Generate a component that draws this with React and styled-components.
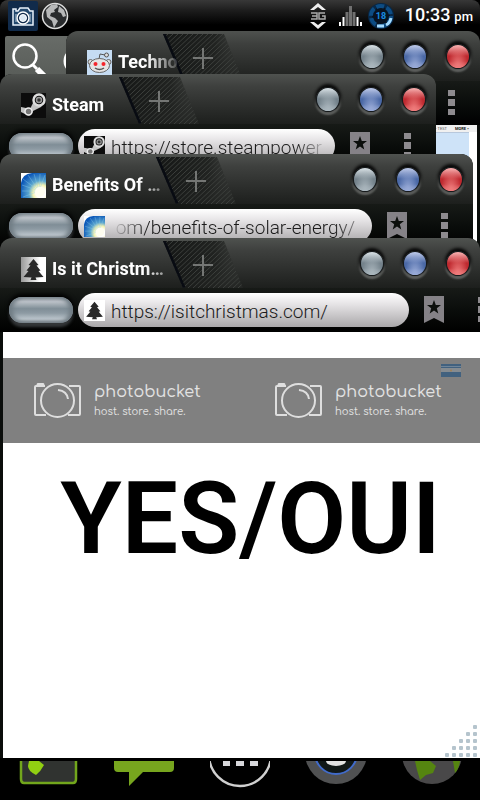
import React from "react";
import styled, { createGlobalStyle, css } from "styled-components";

const Global = createGlobalStyle`
  * { box-sizing: border-box; }
  html, body { margin: 0; background: #000; }
  body { font-family: Roboto, "Liberation Sans", sans-serif; }
  button { border: 0; padding: 0; background: none; font: inherit; color: inherit; cursor: pointer; }
`;

const Screen = styled.div`
  position: relative;
  min-height: 100vh;
  display: flex;
  flex-direction: column;
  overflow: hidden;
  background: #000;
`;

const StatusBar = styled.header`
  height: 31px;
  display: flex;
  align-items: center;
  padding: 1px 7px 0 8px;
  border-radius: 8px 8px 0 0;
  background: linear-gradient(#383838, #1c1c1c 35%, #000 80%);
  color: #fff;
`;
const StatusGroup = styled.div`
  display: flex;
  align-items: center;
  gap: ${(p) => p.$gap}px;
`;
const Spacer = styled.div`flex: 1;`;
const Clock = styled.time`
  margin-left: 9px;
  font-size: 18px;
  line-height: 32px;
  font-weight: 500;
  white-space: nowrap;
  small { font-size: 13px; margin-left: 4px; }
`;

const Home = styled.main`
  flex: 1;
  display: flex;
  flex-direction: column;
  justify-content: space-between;
`;
const SearchWidget = styled.button`
  align-self: flex-start;
  display: block;
  margin: 5px 0 0 5px;
  width: 100px;
  height: 50px;
  text-align: left;
  border-radius: 2px;
  background: linear-gradient(#686c68, #555955);
  svg { display: block; }
`;
const Dock = styled.nav`
  height: 39px;
  display: flex;
  justify-content: space-between;
  padding: 0 18px;
`;
const DockItem = styled.button`
  width: 60px;
  height: 39px;
  svg { display: block; }
`;

/* Floating browser windows */
const Frame = styled.section`
  position: absolute;
  left: ${(p) => p.$left}px;
  right: ${(p) => p.$right}px;
  top: ${(p) => p.$top}px;
  ${(p) => (p.$bottom ? css`bottom: ${p.$bottom}px;` : css`height: ${p.$height}px;`)}
  display: flex;
  flex-direction: column;
  overflow: hidden;
  border-radius: 12px 12px 0 0;
  background: #0a0d0b;
`;
const TitleBar = styled.div`
  flex: none;
  height: 50px;
  display: flex;
  align-items: flex-start;
  padding: 0 10px 0 21px;
  background: linear-gradient(#4f524f 0, #3e403e 25%, #2a2c2a 70%, #1d1f1d 100%);
`;
const Tab = styled.button`
  flex: 1;
  min-width: 0;
  height: 26px;
  margin-top: 18px;
  display: flex;
  align-items: center;
  gap: 6px;
  z-index: 1;
  color: #fff;
  svg { flex: none; }
`;
const TabTitle = styled.span`
  flex: 1;
  text-align: left;
  white-space: nowrap;
  font-size: 18px;
  line-height: 28px;
  font-weight: 700;
  mask-image: linear-gradient(90deg, #000 calc(100% - 32px), transparent calc(100% + 6px));
`;
const NewTab = styled.button`
  flex: none;
  width: 80px;
  height: 47px;
  margin: 3px 117px 0 -14px;
  svg { display: block; }
`;
const Orbs = styled.div`
  flex: none;
  display: flex;
  gap: 19px;
  padding-top: 13px;
`;
const tones = {
  gray: ["#d0d9de", "#74828b", "#a9b5bc"],
  blue: ["#b5c2e4", "#4b69a6", "#97a9d6"],
  red: ["#f4a7a7", "#bf2a30", "#ee7a7a"],
};
const Orb = styled.button`
  width: 24px;
  height: 25px;
  border: 1px solid #15191b;
  border-radius: 50%;
  background: ${(p) => {
    const [a, b, c] = tones[p.$tone];
    return `radial-gradient(ellipse at 50% 100%, ${c} 5%, transparent 65%), linear-gradient(${a} 5%, ${b} 48%, ${b} 70%, ${c})`;
  }};
  box-shadow: 0 -2px 3px 1px #080808, 0 2px 2px 1px #636563;
`;

const Toolbar = styled.form`
  flex: none;
  height: 44px;
  display: flex;
  align-items: center;
  margin-right: ${(p) => -p.$overflow}px;
  padding: 0 25px 0 9px;
  background: linear-gradient(#171a17, #0a0d0b 50%, #000);
`;
const Pill = styled.button`
  flex: none;
  width: 64px;
  height: 26px;
  border-radius: 13px;
  background: linear-gradient(#989fa6 0, #bcc2c8 18%, #808e97 45%, #8d9aa3 62%, #bcc6cc 85%, #7e858a);
  box-shadow: inset 4px 0 4px #717d85, inset -4px 0 4px #717d85, 0 -3px 4px #000, 0 4px 3px #35383a;
`;
const Address = styled.label`
  flex: 1;
  min-width: 0;
  height: 34px;
  display: flex;
  align-items: center;
  gap: 6px;
  margin: 0 15px 0 5px;
  padding: 0 6px;
  border-radius: 17px;
  background: linear-gradient(#fff, #e4e2e4 35%, #a9a7a9);
  svg { flex: none; }
`;
const fades = {
  none: "none",
  end: "linear-gradient(90deg, #000 calc(100% - 34px), transparent)",
  both: "linear-gradient(90deg, transparent, #000 34px, #000 calc(100% - 34px), rgba(0,0,0,.25))",
};
const AddressInput = styled.input`
  flex: 1;
  min-width: 0;
  height: 32px;
  padding: 2px 0 0;
  border: 0;
  outline: 0;
  background: none;
  color: #1b1b1b;
  font: 300 19px/30px Roboto, "Liberation Sans", sans-serif;
  text-align: left;
  mask-image: ${(p) => fades[p.$fade]};
`;
const ToolButton = styled.button`
  flex: none;
  height: 28px;
  margin-right: ${(p) => p.$after || 0}px;
  svg { display: block; }
`;

const Page = styled.div`
  flex: 1;
  position: relative;
  margin-left: 3px;
  margin-right: ${(p) => p.$edge || 0}px;
  background: #fff;
`;
const RedditNav = styled.div`
  height: 7px;
  padding-right: 8px;
  display: flex;
  justify-content: flex-end;
  gap: 8px;
  background: #f0f0f0;
  color: #555;
  font-size: 4px;
  line-height: 7px;
  b { color: #111; }
`;
const RedditBanner = styled.div`
  height: 90px;
  margin: 0 8px 0 0;
  border-top: 1px solid #b8c8dc;
  background: #cee3f8;
`;
const Answer = styled.h1`
  margin: 0;
  padding: 128px 0 0 18px;
  text-align: center;
  color: #000;
  font-size: 100px;
  line-height: 117px;
  font-weight: 600;
  white-space: nowrap;
`;
const Watermark = styled.div`
  position: absolute;
  left: 0;
  right: 0;
  top: 26px;
  height: 85px;
  display: grid;
  grid-template-columns: repeat(2, 241px);
  overflow: hidden;
  background: #808080;
`;
const Brand = styled.div`
  display: flex;
  align-items: flex-start;
  gap: 12px;
  padding: 21px 0 0 30px;
  color: #e2e2e2;
  svg { flex: none; }
`;
const BrandName = styled.div`
  font: 500 16px/26px Comfortaa, Lato, sans-serif;
`;
const BrandLine = styled.div`
  font: 500 10px/14px Comfortaa, Lato, sans-serif;
`;
const Flag = styled.div`
  position: absolute;
  top: 32px;
  right: 19px;
  svg { display: block; }
`;
const Grip = styled.div`
  position: absolute;
  right: 2px;
  bottom: 0;
  svg { display: block; }
`;

function Favicon({ kind, size }) {
  return (
    <svg width={size} height={size} viewBox="0 0 25 25" aria-hidden="true">
      {kind === "reddit" && (
        <>
          <rect width="25" height="25" fill="#c5dcf3" />
          <path d="M12 9 13 4l5 1" fill="none" stroke="#555" />
          <circle cx="19.500" cy="5" r="2" fill="#ddd" stroke="#555" />
          <circle cx="3.500" cy="12" r="2.500" fill="#ddd" stroke="#666" />
          <circle cx="21.500" cy="12" r="2.500" fill="#ddd" stroke="#666" />
          <ellipse cx="12.500" cy="15.500" rx="10" ry="7" fill="#e4e4e4" stroke="#666" />
          <circle cx="8.500" cy="14" r="2" fill="#f4252b" />
          <circle cx="16.500" cy="14" r="2" fill="#f4252b" />
          <path d="M8 18q4.500 3 9 0" fill="none" stroke="#555" strokeWidth="1.500" />
        </>
      )}
      {kind === "steam" && (
        <>
          <rect width="25" height="25" fill="#0c0c0c" />
          <path d="M0 14 5 15 9 16 13 8 23 9 20 14 12 18Q10 25 4 21L0 19Z" fill="#c4c4c4" />
          <circle cx="18" cy="7" r="5.500" fill="#111" stroke="#ddd" strokeWidth="2.500" />
          <circle cx="18" cy="7" r="2.500" fill="#333" stroke="#999" strokeWidth="1.500" />
          <circle cx="7.500" cy="18.500" r="3.500" fill="#777" stroke="#eee" strokeWidth="1.500" />
        </>
      )}
      {kind === "solar" && (
        <>
          <defs>
            <radialGradient id={`sun${size}`} cx="0.8" cy="0.8" r="0.95">
              <stop offset="0.2" stopColor="#fff" />
              <stop offset="0.34" stopColor="#f5f3b0" />
              <stop offset="0.52" stopColor="#5aa5cf" />
              <stop offset="0.9" stopColor="#0b57b8" />
            </radialGradient>
          </defs>
          <rect width="25" height="25" fill="#fff" />
          <path d="M0 25V10Q1 1 11 0H25V25Z" fill={`url(#sun${size})`} />
          <path d="M18 18 2 6M18 18 7 2M18 18 13 1M18 18 19 1M18 18 24 2M18 18 1 12M18 18 1 18M18 18 2 24" stroke="#8fd0ec" strokeOpacity=".4" />
          <circle cx="19" cy="19" r="5" fill="#fffef0" />
        </>
      )}
      {kind === "tree" && (
        <>
          <defs>
            <linearGradient id={`paper${size}`}>
              <stop offset="0" stopColor={size > 22 ? "#999" : "#fff"} />
              <stop offset="0.75" stopColor="#fff" />
            </linearGradient>
          </defs>
          <rect width="25" height="25" fill={`url(#paper${size})`} />
          <path d="m12.500 2 5 6-2 .5 4 5-2 .5 5 6-8 .5 1 2.500h-6l1-2.500-8-.5 5-6-2-.5 4-5-2-.5Z" fill="#292929" />
        </>
      )}
    </svg>
  );
}

const slits = Array.from({ length: 28 }, (_, i) => i * 5 - 55);

function BrowserWindow({ title, url, icon, fade = "none", overflow = 0, children, ...place }) {
  const pid = `slant-${icon}`;
  return (
    <Frame {...place} aria-label={title}>
      <TitleBar>
        <Tab type="button">
          <Favicon kind={icon} size={25} />
          <TabTitle>{title}</TabTitle>
        </Tab>
        <NewTab type="button" aria-label="New tab">
          <svg width="80" height="47" viewBox="0 0 80 47">
            <defs>
              <clipPath id={pid}><path d="M0 0H61L80 47H20Z" /></clipPath>
              <linearGradient id={`${pid}-g`}>
                <stop offset="0" stopColor="#151716" />
                <stop offset=".65" stopColor="#212321" />
                <stop offset="1" stopColor="#303230" stopOpacity=".3" />
              </linearGradient>
            </defs>
            <g clipPath={`url(#${pid})`}>
              <rect width="80" height="47" fill={`url(#${pid}-g)`} />
              {slits.map((x) => (
                <path key={x} d={`M${x} 47 ${x + 50} 0`} stroke="#3d403d" strokeWidth="1" />
              ))}
              <path d="M0 0 20 47" stroke="#080b12" strokeWidth="5" />
            </g>
            <path d="M30 24H50M40 14V35" stroke="#747674" strokeWidth="2" />
          </svg>
        </NewTab>
        <Orbs>
          <Orb type="button" $tone="gray" aria-label="Minimize" />
          <Orb type="button" $tone="blue" aria-label="Maximize" />
          <Orb type="button" $tone="red" aria-label="Close" />
        </Orbs>
      </TitleBar>
      <Toolbar $overflow={overflow} onSubmit={(e) => e.preventDefault()}>
        <Pill type="button" aria-label="Back" />
        <Address>
          <Favicon kind={icon} size={21} />
          <AddressInput aria-label="Address" defaultValue={url} $fade={fade} />
        </Address>
        <ToolButton type="button" aria-label="Bookmark" $after={33}>
          <svg width="20" height="28" viewBox="0 0 20 28">
            <path d="M0 0H20V27L10 22 0 27Z" fill="#858287" />
            <path d="m10 4 1.800 5H17l-4.200 3.300 1.500 5.200L10 14.400 5.700 17.500l1.500-5.200L3 9h5.200Z" fill="#0c0f0c" />
          </svg>
        </ToolButton>
        <ToolButton type="button" aria-label="Menu">
          <svg width="8" height="28" viewBox="0 0 8 28">
            <path d="M1 1H8V7H1ZM1 10H8V17H1ZM1 20H8V26H1Z" fill="#8e8b8f" />
          </svg>
        </ToolButton>
      </Toolbar>
      {children}
    </Frame>
  );
}

function StatusIcons() {
  return (
    <>
      <StatusGroup $gap={3}>
        <svg width="30" height="30" viewBox="0 0 30 30">
          <rect width="30" height="30" rx="2" fill="#112b4b" />
          <path d="M5 10V8H8V10H10L12 7H20L22 10H25V24H5Z" fill="#24496e" stroke="#e8f1fa" strokeWidth="1.500" />
          <circle cx="15" cy="17" r="6" fill="#112b4b" stroke="#fff" strokeWidth="1.500" />
          <circle cx="15" cy="17" r="3.500" fill="#dce8f3" stroke="#fff" />
          <path d="M8 13v8M22 13v8" stroke="#b9cddd" />
        </svg>
        <svg width="28" height="30" viewBox="0 0 28 30">
          <circle cx="14" cy="15" r="12.500" fill="#292b2d" stroke="#dcdcdc" strokeWidth="1.500" />
          <path d="m5 9 5-5 6-1 1 3-4 3 1 2-4 1-1 3 5 2 3 3-3 5-1 2-2-7-5-4ZM18 5l5 4 2 6-3 1-2-4-3-1Z" fill="#b7b8b9" />
        </svg>
      </StatusGroup>
      <Spacer />
      <StatusGroup $gap={12}>
        <svg width="16" height="28" viewBox="0 0 16 28">
          <path d="M0 8 8 1l8 7H12L8 5 4 8ZM0 20l8 7 8-7H12L8 23 4 20Z" fill="#eee" />
          <path d="M1 11H7V17H1M2 14H7M15 11H9V17H15V14H12" stroke="#aaa" strokeWidth="1.500" fill="none" />
        </svg>
        <svg width="24" height="28" viewBox="0 0 24 28">
          <path d="M2 24V20M5.500 24V15M19.500 24V15M23 24V20" stroke="#fff" strokeWidth="2" />
          <path d="M9 24V10M12.500 24V4M16 24V10" stroke="#707070" strokeWidth="3" />
        </svg>
      </StatusGroup>
      <StatusGroup $gap={0}>
        <svg width="34" height="30" viewBox="-4 0 34 30">
          <circle cx="15" cy="15" r="11" fill="#071321" stroke="#082746" strokeWidth="4" />
          <circle cx="15" cy="15" r="10" fill="none" stroke="#0d4c83" strokeWidth="4" strokeDasharray="8 2.500" />
          <path d="M25 17q-1 5-5 7M18 25h-7" fill="none" stroke="#a5dcff" strokeWidth="3" />
          <text x="15" y="18" textAnchor="middle" fontFamily="Roboto" fontSize="9" fontWeight="700" fill="#168be2">18</text>
        </svg>
      </StatusGroup>
      <Clock>10:33<small>pm</small></Clock>
    </>
  );
}

function Photobucket() {
  return (
    <Brand>
      <svg width="49" height="42" viewBox="0 -3 49 42" fill="none" stroke="#dedede" strokeWidth="2">
        <path d="M12 4H3Q2 4 2 5V32Q2 33 3 33H13M36 4H46Q47 4 47 5V32Q47 33 46 33H35" />
        <path d="M4 3 5 2H10L11 3" />
        <circle cx="24.500" cy="18.500" r="16.500" />
        <path d="M25 8q9 1 10 9" />
      </svg>
      <div>
        <BrandName>photobucket</BrandName>
        <BrandLine>host. store. share.</BrandLine>
      </div>
    </Brand>
  );
}

const gripDots = [0, 1, 2, 3, 4].flatMap((row) =>
  Array.from({ length: row + 1 }, (_, i) => [28 - i * 7, 2 + row * 7])
);

export default function App() {
  return (
    <Screen>
      <Global />
      <StatusBar><StatusIcons /></StatusBar>
      <Home>
        <SearchWidget aria-label="Search">
          <svg width="100" height="50" viewBox="0 0 100 50" fill="none" stroke="#fff">
            <circle cx="20" cy="20" r="11.500" strokeWidth="2.500" />
            <path d="m28 29 4 4" strokeWidth="3" />
            <path d="m32 33 9 9" strokeWidth="6" />
            <circle cx="72" cy="25" r="12" strokeWidth="3" />
          </svg>
        </SearchWidget>
        <Dock>
          <DockItem aria-label="Phone">
            <svg width="60" height="39" viewBox="0 0 60 39">
              <path d="M3-5V18Q3 22 6 22H55Q58 22 58 18V-5" fill="#303330" stroke="#72a61c" strokeWidth="2.500" />
              <path d="M11 0H21L26 4Q23 10 18 14 10 10 10 5Z" fill="#91cf12" />
            </svg>
          </DockItem>
          <DockItem aria-label="Messages">
            <svg width="60" height="39" viewBox="0 0 60 39">
              <path d="M0 0H60V7Q60 11 56 11H29L15 25V11H4Q0 11 0 7Z" fill="#77a51e" />
            </svg>
          </DockItem>
          <DockItem aria-label="Apps">
            <svg width="60" height="39" viewBox="0 0 60 39">
              <circle cx="30" cy="-6" r="31" fill="none" stroke="#d0d0d0" strokeWidth="2.500" />
              <path d="M13 0h7v5h-7ZM26 0h8v5h-8ZM40 0h8v5h-8Z" fill="#d8d8db" />
            </svg>
          </DockItem>
          <DockItem aria-label="Camera">
            <svg width="60" height="39" viewBox="0 0 60 39">
              <circle cx="30" cy="-8" r="31" fill="#505152" />
              <circle cx="30" cy="-8" r="21" fill="#111817" stroke="#416bca" strokeWidth="2" />
              <ellipse cx="30" cy="0" rx="10" ry="5" fill="#e2e2e2" />
            </svg>
          </DockItem>
          <DockItem aria-label="Browser">
            <svg width="60" height="39" viewBox="0 0 60 39">
              <circle cx="30" cy="-7" r="30" fill="#494849" />
              <path d="M13 0H28L34 5 31 12 24 14 18 19 15 9ZM51 0h7q-1 8-5 12Z" fill="#558510" />
            </svg>
          </DockItem>
        </Dock>
      </Home>

      <BrowserWindow $left={66} $right={0} $top={31} $height={400} icon="reddit" title="Techno" url="http://www.reddit.com/r/technology" fade="end">
        <Page $edge={3}>
          <RedditNav><span>- TEST</span><b>MORE »</b></RedditNav>
          <RedditBanner />
        </Page>
      </BrowserWindow>
      <BrowserWindow $left={0} $right={44} $top={74} $height={300} icon="steam" title="Steam" url="https://store.steampower" fade="end" />
      <BrowserWindow $left={0} $right={7} $top={154} $height={300} icon="solar" title="Benefits Of …" url=" om/benefits-of-solar-energy/" fade="both" />
      <BrowserWindow $left={0} $right={0} $top={238} $bottom={42} icon="tree" title="Is it Christm…" url="https://isitchristmas.com/" overflow={30}>
        <Page>
          <Answer>YES/OUI</Answer>
          <Watermark>
            <Photobucket />
            <Photobucket />
          </Watermark>
          <Flag>
            <svg width="20" height="13" viewBox="0 0 20 13">
              <rect width="20" height="13" fill="#41617f" />
              <path d="M0 4H20V8H0Z" fill="#858b90" />
              <path d="M0 2.500H20" stroke="#6f8498" />
              <circle cx="10" cy="6.500" r="1" fill="#a08055" />
            </svg>
          </Flag>
          <Grip>
            <svg width="33" height="34" viewBox="0 0 33 34">
              {gripDots.map(([x, y]) => (
                <rect key={`${x}-${y}`} x={x} y={y - 1} width="4" height="4" rx="1" fill="#b5c4cd" />
              ))}
            </svg>
          </Grip>
        </Page>
      </BrowserWindow>
    </Screen>
  );
}
